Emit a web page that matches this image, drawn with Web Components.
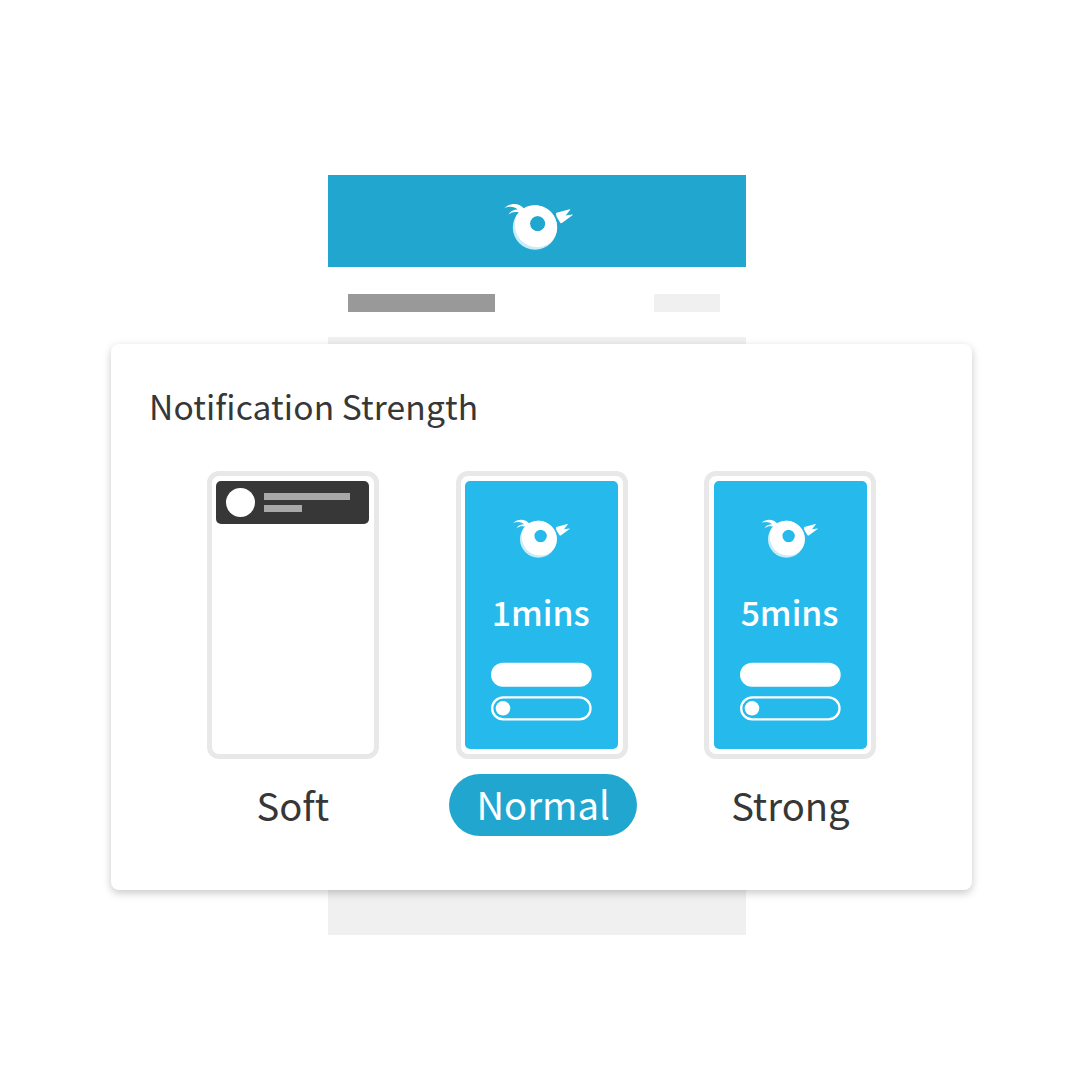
<!DOCTYPE html>
<html lang="en">
<head>
<meta charset="utf-8">
<title>Notification Strength</title>
<style>
html,body{margin:0;background:#fff}
body{width:1080px;height:1083px;overflow:hidden;font-family:"Noto Sans CJK JP","Noto Sans CJK SC",sans-serif;color:#373737}
</style>
</head>
<body>
<strength-scene>
  <app-backdrop slot="back"></app-backdrop>
  <strength-card slot="card" heading="Notification Strength">
    <strength-option label="Soft"><notice-banner></notice-banner></strength-option>
    <strength-option label="Normal" selected><alarm-screen>1mins</alarm-screen></strength-option>
    <strength-option label="Strong"><alarm-screen>5mins</alarm-screen></strength-option>
  </strength-card>
</strength-scene>
<script>
const define = (name, markup, setup) => customElements.define(name, class extends HTMLElement {
  connectedCallback() {
    if (this.shadowRoot) return;
    const t = document.createElement('template');
    t.innerHTML = markup;
    const root = this.attachShadow({mode: 'open'});
    root.append(t.content.cloneNode(true));
    if (setup) setup(this, root);
  }
});

define('bird-logo', `
<style>:host{display:block}svg{display:block;width:100%;height:100%}</style>
<svg viewBox="0 0 100 75" fill="#fff">
  <path fill="#c9ecf9" fill-rule="evenodd" d="M45 15.3a22.2 22.2 0 1 0 0 44.4a22.2 22.2 0 1 0 0-44.4zM47.6 26.1a7.6 7.6 0 1 1 0 15.2a7.6 7.6 0 1 1 0-15.2z"/>
  <path fill-rule="evenodd" d="M45 15.3C57.3 15.3 67.1 25.2 67.1 37.3C67.1 48.5 58.5 57.2 47.8 57.2C35 57.2 24.9 47.5 24.9 34.5C24.9 32.3 25.2 29.7 25.8 27.2C29 20 36.5 15.3 45 15.3zM47.6 26.1a7.6 7.6 0 1 1 0 15.2a7.6 7.6 0 1 1 0-15.2z"/>
  <path d="M14.6 18C19.5 13 29.5 12.2 34.2 19L31.2 23.2C27.5 21.6 22.5 21 18.5 24.5C20.3 21 24 19.5 27.6 19.4C24.6 16.6 19.5 15.7 14.6 18z"/>
  <path d="M66.6 22.7L79.7 19.2Q80.8 19 80 20L75.7 25.4L82.2 24.5Q83.3 24.5 82.5 25.3L72.2 32.8Q70.7 33.7 69.9 32.2C68.8 29.7 66.2 27.6 66 24Q65.9 23 66.6 22.7z"/>
</svg>`);

define('app-backdrop', `
<style>
:host{display:flex;flex-direction:column;width:418px;height:760px;background:#f0f0f0}
header{height:92px;background:#21a6d0;display:flex;justify-content:center;padding-left:6px;box-sizing:border-box}
bird-logo{width:100px;height:75px;margin-top:15px}
.row{height:70px;background:#fff;box-sizing:border-box;padding:27px 26px 0 20px;display:flex;justify-content:space-between}
.row i{height:18px;width:147px;background:#999}
.row i+i{width:66px;background:#f0f0f0}
</style>
<header><bird-logo></bird-logo></header>
<div class="row"><i></i><i></i></div>`);

define('notice-banner', `
<style>
:host{display:flex;box-sizing:border-box;width:153px;height:43px;padding:7px 0 0 9.5px;background:#373737;border-radius:5px}
.dot{width:29px;height:29px;border-radius:50%;background:#fff}
.lines{padding:5px 0 0 9px;display:flex;flex-direction:column;gap:5px}
i{display:block;height:7px;width:86px;background:#a8a8a8}
i+i{width:38px}
</style>
<div class="dot"></div><div class="lines"><i></i><i></i></div>`);

define('alarm-screen', `
<style>
:host{display:flex;flex-direction:column;align-items:center;width:153px;height:268px;background:#25baeb;border-radius:5px;color:#fff}
bird-logo{width:83.2px;height:62.4px;margin:26.5px 0 0 1px}
.time{font-size:33.7px;font-weight:500;line-height:44px;height:44px;margin:20.1px 1.6px 0 0;white-space:nowrap}
svg{display:block;margin-top:28px}
</style>
<bird-logo></bird-logo>
<div class="time"><slot></slot></div>
<svg width="101" height="60" viewBox="0 0 101 60"><rect y=".8" width="100.7" height="24" rx="12" fill="#fff"/><rect x="1.2" y="35.4" width="98.3" height="22" rx="11" fill="none" stroke="#fff" stroke-width="2.3"/><circle cx="12" cy="46.3" r="7.3" fill="#fff"/></svg>`);

define('strength-option', `
<style>
:host{display:flex;flex-direction:column;align-items:center;width:172px}
.device{box-sizing:border-box;width:172px;height:287.5px;border:5px solid #e8e8e8;border-radius:12px;padding-top:5px;display:flex;flex-direction:column;align-items:center;background:#fff}
.label{margin-top:15.5px;height:62px;line-height:62px;font-size:38.2px;white-space:nowrap;text-align:center}
:host([selected]) .label{line-height:60px;width:188px;margin-left:3px;background:#21a6d0;color:#fff;border-radius:31px}
</style>
<div class="device"><slot></slot></div>
<div class="label"></div>`,
(host, root) => { root.querySelector('.label').textContent = host.getAttribute('label'); });

define('strength-card', `
<style>
:host{display:flex;flex-direction:column;box-sizing:border-box;width:861px;height:546px;background:#fff;border-radius:8px;box-shadow:0 3px 9px rgba(0,0,0,.22);padding-top:42px}
h1{margin:0 0 0 38px;font-size:33.6px;letter-spacing:.11px;font-weight:400;line-height:40px;height:40px;white-space:nowrap}
.options{display:flex;gap:76.8px;margin:45px 0 0 95.8px}
</style>
<h1></h1><div class="options"><slot></slot></div>`,
(host, root) => { root.querySelector('h1').textContent = host.getAttribute('heading'); });

define('strength-scene', `
<style>
:host{display:grid;width:1080px;height:1083px;grid-template:1083px / 1080px;background:#fff}
slot{display:block;grid-area:1/1}
.back{padding:175px 0 0 328px}
.card{padding:344px 0 0 111px}
</style>
<slot class="back" name="back"></slot><slot class="card" name="card"></slot>`);
</script>
</body>
</html>
